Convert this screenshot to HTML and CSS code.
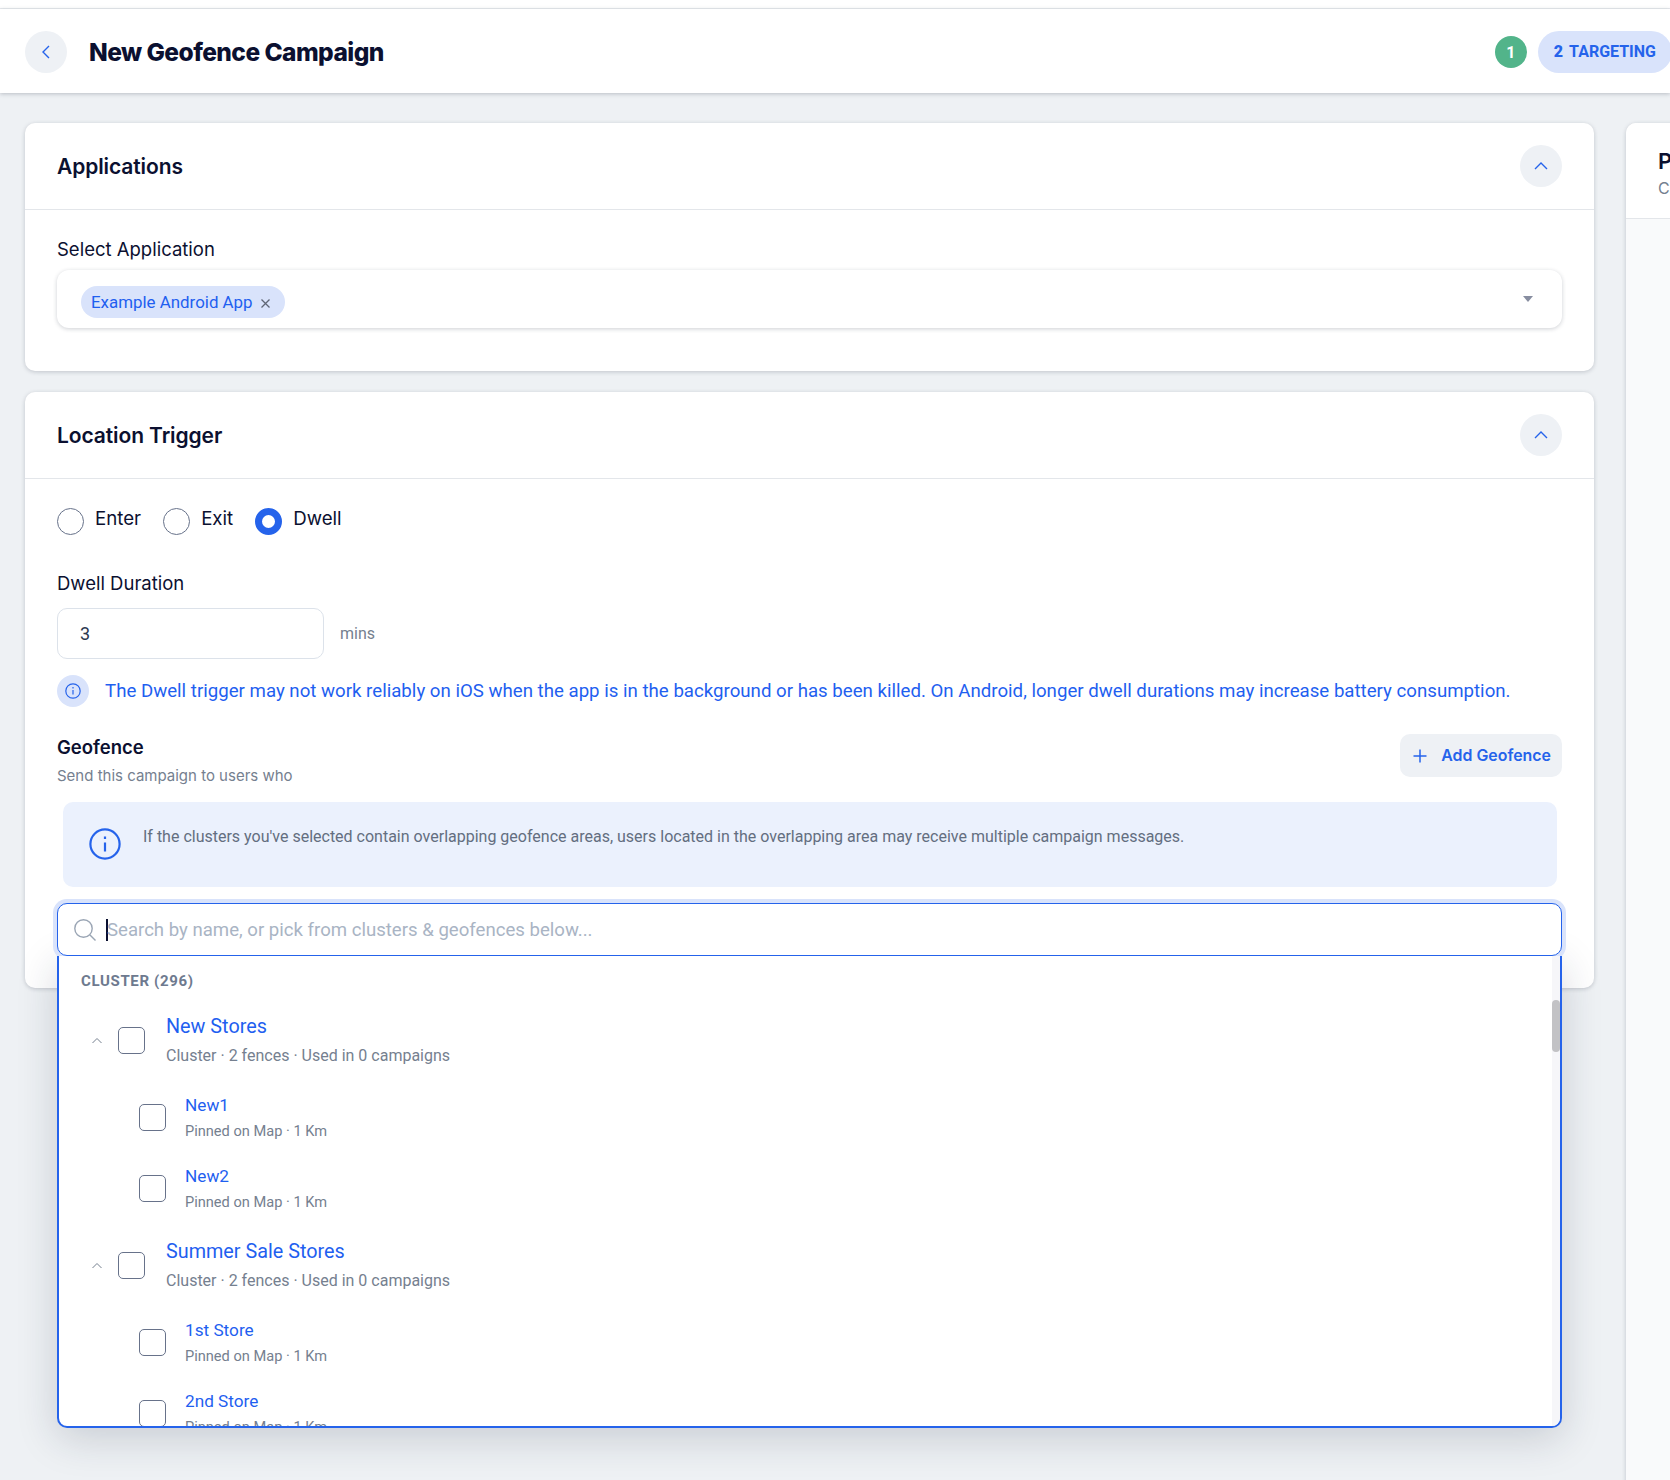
FILE: index.html
```html
<!DOCTYPE html>
<html lang="en">
	<head>
		<meta charset="UTF-8" />
		<title>New Geofence Campaign</title>
		<link rel="stylesheet" href="styles.css">
	</head>
	<body>
		<div class="topstrip"></div>
		<div class="topbar">
			<button class="round-btn back">
				<svg width="14" height="14" viewBox="0 0 14 14"><path d="M10 1 L4 7 L10 13" /></svg>
			</button>
			<h1>New Geofence Campaign</h1>
			<div class="steps">
				<span class="step-done">1</span>
				<span class="step-now"><b>2</b>TARGETING</span>
			</div>
		</div>

		<div class="main">
			<div class="left">
				<div class="card card-apps">
					<div class="card-head">
						<h2>Applications</h2>
						<button class="round-btn">
							<svg width="14" height="14" viewBox="0 0 14 14"><path d="M1 10 L7 4 L13 10" /></svg>
						</button>
					</div>
					<div class="card-body">
						<div class="label">Select Application</div>
						<div class="select">
							<span class="chip">Example Android App
								<svg width="11" height="11" viewBox="0 0 11 11"><path d="M1.5 1.5 L9.5 9.5 M9.5 1.5 L1.5 9.5" /></svg>
							</span>
							<span class="caret-down"></span>
						</div>
					</div>
				</div>

				<div class="card card-trigger">
					<div class="card-head">
						<h2>Location Trigger</h2>
						<button class="round-btn">
							<svg width="14" height="14" viewBox="0 0 14 14"><path d="M1 10 L7 4 L13 10" /></svg>
						</button>
					</div>
					<div class="card-body">
						<div class="radios">
							<div class="radio"><i></i><span>Enter</span></div>
							<div class="radio"><i></i><span>Exit</span></div>
							<div class="radio on"><i></i><span>Dwell</span></div>
						</div>

						<div class="label">Dwell Duration</div>
						<div class="duration">
							<div class="num-input">3</div>
							<span>mins</span>
						</div>

						<div class="warn">
							<span class="warn-icon">
								<svg width="18" height="18" viewBox="0 0 18 18"><circle cx="9" cy="9" r="7.2" /><path d="M9 8 V12.6 M9 5 V6.4" /></svg>
							</span>
							<span>The Dwell trigger may not work reliably on iOS when the app is in the background or has been killed. On Android, longer dwell durations may increase battery consumption.</span>
						</div>

						<div class="geo-head">
							<div>
								<h3>Geofence</h3>
								<p>Send this campaign to users who</p>
							</div>
							<button class="add-btn">
								<svg width="14" height="14" viewBox="0 0 14 14"><path d="M7 .5 V13.5 M.5 7 H13.5" /></svg>
								Add Geofence
							</button>
						</div>

						<div class="notice">
							<svg width="32" height="32" viewBox="0 0 32 32"><circle cx="16" cy="16" r="14.6" /><path d="M16 14.5 V23.5 M16 8.5 V11" /></svg>
							<p>If the clusters you've selected contain overlapping geofence areas, users located in the overlapping area may receive multiple campaign messages.</p>
						</div>

						<div class="picker">
							<div class="search">
								<svg width="24" height="24" viewBox="0 0 24 24"><circle cx="10.5" cy="10.5" r="8.7" /><path d="M17 17 L22.5 22.5" /></svg>
								<span class="text-caret"></span>
								<span class="placeholder">Search by name, or pick from clusters &amp; geofences below...</span>
							</div>
							<div class="drop">
								<div class="scroll-track"><div class="scroll-thumb"></div></div>
								<div class="drop-title">CLUSTER (296)</div>

								<div class="row cluster">
									<svg class="fold" width="12" height="12" viewBox="0 0 12 12"><path d="M1.5 8 L6 3.5 L10.5 8" /></svg>
									<i class="box"></i>
									<div class="row-text">
										<a>New Stores</a>
										<small>Cluster · 2 fences · Used in 0 campaigns</small>
									</div>
								</div>
								<div class="row fence">
									<i class="box"></i>
									<div class="row-text">
										<a>New1</a>
										<small>Pinned on Map · 1 Km</small>
									</div>
								</div>
								<div class="row fence">
									<i class="box"></i>
									<div class="row-text">
										<a>New2</a>
										<small>Pinned on Map · 1 Km</small>
									</div>
								</div>

								<div class="row cluster">
									<svg class="fold" width="12" height="12" viewBox="0 0 12 12"><path d="M1.5 8 L6 3.5 L10.5 8" /></svg>
									<i class="box"></i>
									<div class="row-text">
										<a>Summer Sale Stores</a>
										<small>Cluster · 2 fences · Used in 0 campaigns</small>
									</div>
								</div>
								<div class="row fence">
									<i class="box"></i>
									<div class="row-text">
										<a>1st Store</a>
										<small>Pinned on Map · 1 Km</small>
									</div>
								</div>
								<div class="row fence">
									<i class="box"></i>
									<div class="row-text">
										<a>2nd Store</a>
										<small>Pinned on Map · 1 Km</small>
									</div>
								</div>
							</div>
						</div>
					</div>
				</div>
			</div>

			<div class="side">
				<div class="side-head">
					<h2>Preview</h2>
					<p>Campaign message</p>
				</div>
			</div>
		</div>
	</body>
</html>
```

FILE: styles.css
```css
* {
	box-sizing: border-box;
}
html,
body {
	height: 100%;
}
body {
	margin: 0;
	height: 1480px;
	overflow: hidden;
	background: #eef1f4;
	color: #0b1030;
	font-family: "Inter", "Liberation Sans", sans-serif;
}
h1,
h2,
h3,
p {
	margin: 0;
}
svg {
	fill: none;
	stroke: currentColor;
	flex: 0 0 auto;
	display: block;
}

.topstrip {
	height: 9px;
	background: #fff;
	border-bottom: 1px solid #e8ebef;
}
.topbar {
	position: relative;
	display: flex;
	align-items: center;
	height: 84px;
	padding: 2px 0 0 25px;
	background: #fff;
	box-shadow: 0 1px 4px rgba(30, 40, 60, 0.25);
}
.topbar h1 {
	margin: 0 0 0 22px;
	font-size: 24.5px;
	line-height: 30px;
	font-weight: 800;
	letter-spacing: -0.55px;
}
.steps {
	display: flex;
	align-items: center;
	margin-left: auto;
	margin-right: -2px;
	font-family: "Roboto", sans-serif;
	font-weight: 700;
}
.step-done {
	display: flex;
	align-items: center;
	justify-content: center;
	width: 32px;
	height: 32px;
	margin-right: 11px;
	border-radius: 50%;
	background: #52b48a;
	color: #fff;
	font-size: 16px;
}
.step-now {
	display: flex;
	align-items: center;
	height: 42px;
	padding: 0 16px 2px;
	border-radius: 21px;
	background: #d9e3fb;
	color: #2563eb;
	font-size: 16px;
}
.step-now b {
	margin-right: 6px;
}

.round-btn {
	display: flex;
	align-items: center;
	justify-content: center;
	flex: 0 0 auto;
	width: 42px;
	height: 42px;
	padding: 0;
	border: 0;
	border-radius: 50%;
	background: #eef1f5;
	color: #2563eb;
	stroke-width: 1.4;
}

.main {
	display: flex;
	gap: 32px;
	padding: 30px 0 0 25px;
	width: 2100px;
}
.left {
	flex: 0 0 1569px;
}
.card {
	background: #fff;
	border-radius: 10px;
	box-shadow: 0 1px 4px rgba(30, 40, 60, 0.22);
}
.card-apps {
	height: 248px;
	margin-bottom: 21px;
}
.card-trigger {
	height: 596px;
}
.card-head {
	display: flex;
	align-items: center;
	justify-content: space-between;
	height: 87px;
	padding: 0 32px;
	border-bottom: 1px solid #e3e6ea;
}
.card-head h2 {
	font-size: 21px;
	font-weight: 600;
	letter-spacing: -0.1px;
}
.card-body {
	padding: 26px 32px 0;
}
.card-apps .card-body {
	padding-top: 27px;
}
.label {
	font-size: 18.5px;
	line-height: 24px;
	margin-bottom: 9px;
}
.card-trigger .label {
	margin-bottom: 13px;
}

.select {
	display: flex;
	align-items: center;
	justify-content: space-between;
	height: 58px;
	padding: 6px 28px 0 24px;
	border-radius: 12px;
	background: #fff;
	box-shadow: 0 1px 4px rgba(30, 40, 60, 0.22);
}
.chip {
	display: flex;
	align-items: center;
	height: 32px;
	padding: 0 14px 0 10px;
	border-radius: 16px;
	background: #d9e3fb;
	color: #1f5ff0;
	font-family: "Roboto", sans-serif;
	font-size: 16.9px;
}
.chip svg {
	margin: 2px 0 0 7px;
	color: #5f6675;
	stroke-width: 1.3;
}
.caret-down {
	width: 0;
	height: 0;
	margin: -6px 1px 0 0;
	border-left: 5px solid transparent;
	border-right: 5px solid transparent;
	border-top: 6px solid #878da0;
}

.radios {
	display: flex;
	align-items: flex-start;
	margin-bottom: 36px;
}
.radio {
	display: flex;
	align-items: flex-start;
	margin-right: 22px;
	font-size: 18.7px;
	line-height: 24px;
}
.radio span {
	padding-top: 2px;
}
.radio i {
	width: 27px;
	height: 27px;
	margin: 3px 11px 0 0;
	border: 1px solid #67728a;
	border-radius: 50%;
}
.radio.on i {
	border: 7px solid #2563eb;
}

.duration {
	display: flex;
	align-items: center;
	margin-bottom: 16px;
	color: #75808f;
	font-family: "Roboto", sans-serif;
	font-size: 16px;
}
.num-input {
	display: flex;
	align-items: center;
	width: 267px;
	height: 51px;
	margin-right: 16px;
	padding-left: 22px;
	border: 1px solid #dce2ea;
	border-radius: 10px;
	color: #2c3850;
	font-size: 18px;
}
.warn {
	display: flex;
	align-items: center;
	gap: 16px;
	margin-bottom: 27px;
	color: #1f5ff0;
	font-family: "Roboto", sans-serif;
	font-size: 18.66px;
}
.warn-icon {
	display: flex;
	align-items: center;
	justify-content: center;
	flex: 0 0 auto;
	width: 32px;
	height: 32px;
	border-radius: 50%;
	background: #d9e3fb;
	color: #2563eb;
	stroke-width: 1.2;
}

.geo-head {
	display: flex;
	align-items: flex-start;
	justify-content: space-between;
	height: 68px;
}
.geo-head h3 {
	font-size: 18.5px;
	line-height: 26px;
	font-weight: 600;
}
.geo-head p {
	margin-top: 6px;
	color: #75808f;
	font-size: 15px;
	line-height: 20px;
}
.add-btn {
	display: flex;
	align-items: center;
	gap: 14px;
	height: 43px;
	padding: 0 11px 0 13px;
	border: 0;
	border-radius: 10px;
	background: #eef1f5;
	color: #2563eb;
	font-family: "Inter", sans-serif;
	font-size: 15.9px;
	font-weight: 600;
	stroke-width: 1.5;
}

.notice {
	display: flex;
	gap: 22px;
	height: 85px;
	margin: 0 5px 16px 6px;
	padding: 26px 26px 0;
	border-radius: 10px;
	background: #ebf1fd;
}
.notice svg {
	color: #2563eb;
	stroke-width: 2.2;
}
.notice p {
	margin-top: -2px;
	color: #636e80;
	font-family: "Roboto", sans-serif;
	font-size: 16px;
	line-height: 22px;
}

.picker {
	position: relative;
}
.search {
	position: relative;
	z-index: 2;
	display: flex;
	align-items: center;
	height: 53px;
	padding-left: 15px;
	border: 1px solid #2563eb;
	border-radius: 10px;
	background: #fff;
	box-shadow: 0 0 0 4px #d9e3fb;
	clip-path: inset(-4px -4px 0 -4px);
	color: #9aa5b4;
	font-family: "Roboto", sans-serif;
	font-size: 18.6px;
	stroke-width: 1.4;
}
.text-caret {
	width: 2px;
	height: 22px;
	margin-left: 9px;
	background: #0b1030;
}
.placeholder {
	margin-left: -1px;
	color: #a9b4c4;
}
.drop {
	position: absolute;
	z-index: 1;
	top: 52px;
	left: 0;
	right: 0;
	height: 473px;
	overflow: hidden;
	padding-top: 14px;
	border: 2px solid #2563eb;
	border-top: 0;
	border-radius: 0 0 10px 10px;
	background: #fff;
	box-shadow: 0 10px 40px rgba(30, 40, 60, 0.18);
	font-family: "Roboto", sans-serif;
}
.scroll-track {
	position: absolute;
	top: 0;
	right: 0;
	bottom: 0;
	width: 8px;
	padding-top: 45px;
	background: #f6f6f9;
}
.scroll-thumb {
	height: 52px;
	border-radius: 4px;
	background: #c2c2c5;
}
.drop-title {
	height: 24px;
	margin: 0 0 6px 22px;
	color: #6e7a8f;
	font-size: 15px;
	font-weight: 700;
	line-height: 24px;
	letter-spacing: 0.65px;
}
.row {
	display: flex;
	align-items: center;
}
.cluster {
	height: 83px;
	padding-left: 32px;
}
.fence {
	height: 71px;
	padding-left: 80px;
}
.fold {
	margin-right: 15px;
	color: #75808f;
	stroke-width: 1;
}
.box {
	flex: 0 0 auto;
	width: 27px;
	height: 27px;
	border: 1px solid #67728a;
	border-radius: 5px;
}
.row-text {
	display: flex;
	flex-direction: column;
}
.cluster .row-text {
	margin-left: 21px;
	gap: 5px;
}
.fence .row-text {
	margin: -2px 0 0 19px;
	gap: 4px;
}
.row-text a {
	color: #1f5ff0;
}
.cluster a {
	font-size: 19.8px;
	line-height: 26px;
}
.fence a {
	font-size: 17.2px;
	line-height: 24px;
}
.row-text small {
	color: #75808f;
}
.cluster small {
	font-size: 16px;
	line-height: 22px;
}
.fence small {
	font-size: 14.6px;
	line-height: 20px;
}

.side {
	flex: 0 0 440px;
	height: 1400px;
	border-radius: 10px 0 0 0;
	background: #f9fafb;
	box-shadow: 0 1px 4px rgba(30, 40, 60, 0.22);
}
.side-head {
	height: 96px;
	padding: 25px 32px 0;
	border-radius: 10px 0 0 0;
	border-bottom: 1px solid #e3e6ea;
	background: #fff;
}
.side-head h2 {
	font-size: 22px;
	line-height: 26px;
	font-weight: 600;
}
.side-head p {
	margin-top: 4px;
	color: #75808f;
	font-size: 16px;
}
```
